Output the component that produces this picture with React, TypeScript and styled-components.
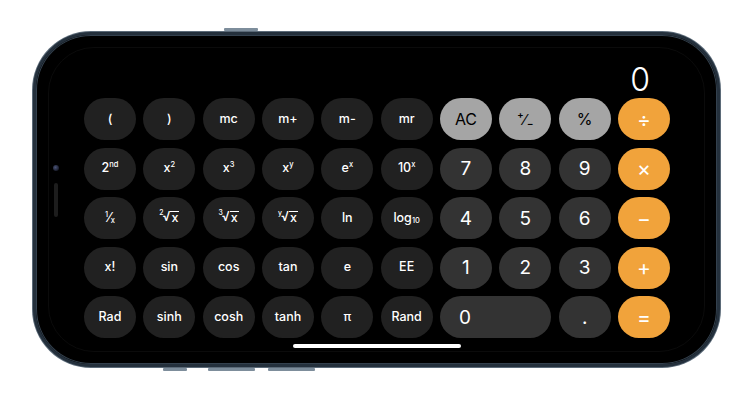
import React from 'react';
import styled, { createGlobalStyle } from 'styled-components';

const GlobalStyle = createGlobalStyle`
  html, body {
    margin: 0;
    background: #ffffff;
  }
  body {
    font-family: Inter, "Liberation Sans", "Noto Sans", sans-serif;
    -webkit-font-smoothing: antialiased;
  }
`;

type Variant = 'sci' | 'num' | 'fn' | 'op';

type Key = {
  label: React.ReactNode;
  variant: Variant;
  wide?: boolean;
  align?: 'left';
};

const colors: Record<Variant, { bg: string; fg: string; size: number }> = {
  sci: { bg: '#212121', fg: '#ffffff', size: 12.5 },
  num: { bg: '#333333', fg: '#ffffff', size: 19 },
  fn: { bg: '#a5a5a5', fg: '#000000', size: 16 },
  op: { bg: '#f1a33b', fg: '#ffffff', size: 21 },
};

const Page = styled.div`
  width: 754px;
  height: 400px;
  padding: 32px 0 0 33px;
  box-sizing: border-box;
`;

const Phone = styled.div`
  position: relative;
  width: 687px;
  height: 335px;
  box-sizing: border-box;
  border: 3px solid #24303c;
  border-radius: 58px;
  background: #000000;
  box-shadow: 0 0 0 1px #5b6a78, inset 0 0 0 1px #33404d;
  padding: 0 47px 0 48px;
  display: flex;
  flex-direction: column;
`;

const ScreenEdge = styled.div`
  position: absolute;
  inset: 12px;
  border-radius: 46px;
  border: 1px solid #0b0b0b;
  pointer-events: none;
`;

/* hardware buttons on the frame edge */
const ButtonRow = styled.div<{ $side: 'top' | 'bottom'; $left: number }>`
  position: absolute;
  ${(p) => (p.$side === 'top' ? 'top: -7px;' : 'bottom: -7px;')}
  left: ${(p) => p.$left}px;
  display: flex;
  gap: 13px;
`;

const SideButton = styled.div<{ $width: number }>`
  width: ${(p) => p.$width}px;
  height: 3px;
  background: #7d8d9b;
  border-radius: 1px;
`;

const Sensors = styled.div`
  position: absolute;
  left: 17px;
  top: 130px;
  display: flex;
  flex-direction: column;
  align-items: center;
  gap: 12px;
`;

const Camera = styled.div`
  width: 6px;
  height: 6px;
  border-radius: 50%;
  background: radial-gradient(circle at 40% 40%, #4a5478, #1a1d2c 70%);
`;

const Speaker = styled.div`
  width: 4px;
  height: 34px;
  border-radius: 2px;
  background: #1d1d1d;
`;

const Display = styled.div`
  height: 63px;
  display: flex;
  align-items: flex-end;
  justify-content: flex-end;
  padding: 0 20px 2px 0;
  box-sizing: border-box;
  color: #ffffff;
  font-size: 32px;
  font-weight: 300;
  line-height: 1;
`;

const Keypad = styled.div`
  display: grid;
  grid-template-columns: repeat(10, 52px);
  grid-auto-rows: 42px;
  column-gap: 7.33px;
  row-gap: 7.5px;
`;

const KeyButton = styled.button<{ $variant: Variant; $wide?: boolean; $align?: 'left' }>`
  grid-column: ${(p) => (p.$wide ? 'span 2' : 'auto')};
  border: none;
  border-radius: 21px;
  background: ${(p) => colors[p.$variant].bg};
  color: ${(p) => colors[p.$variant].fg};
  font-family: inherit;
  font-size: ${(p) => colors[p.$variant].size}px;
  font-weight: ${(p) => (p.$variant === 'sci' ? 500 : 400)};
  display: flex;
  align-items: center;
  justify-content: ${(p) => (p.$align === 'left' ? 'flex-start' : 'center')};
  padding: ${(p) => (p.$align === 'left' ? '0 0 0 19px' : '0')};
  line-height: 1;
  cursor: pointer;
`;

const Sup = styled.sup`
  font-size: 0.6em;
  vertical-align: 0;
  position: relative;
  top: -0.45em;
`;

const Sub = styled.sub`
  font-size: 0.6em;
  vertical-align: 0;
  position: relative;
  top: 0.3em;
`;

const Radical = styled.span`
  display: inline-flex;
  align-items: flex-start;
`;

const RootIndex = styled.span`
  font-size: 0.55em;
  margin-top: -1px;
  margin-right: -1px;
`;

const Radicand = styled.span`
  border-top: 1px solid currentColor;
  padding: 0 1px;
`;

const HomeBar = styled.div`
  align-self: center;
  width: 168px;
  height: 4px;
  border-radius: 2px;
  background: #ffffff;
  margin-top: 6px;
`;

const root = (idx: string) => (
  <Radical>
    <RootIndex>{idx}</RootIndex>√<Radicand>x</Radicand>
  </Radical>
);

const keys: Key[] = [
  { label: '(', variant: 'sci' },
  { label: ')', variant: 'sci' },
  { label: 'mc', variant: 'sci' },
  { label: 'm+', variant: 'sci' },
  { label: 'm-', variant: 'sci' },
  { label: 'mr', variant: 'sci' },
  { label: 'AC', variant: 'fn' },
  { label: '⁺∕₋', variant: 'fn' },
  { label: '%', variant: 'fn' },
  { label: '÷', variant: 'op' },

  { label: <>2<Sup>nd</Sup></>, variant: 'sci' },
  { label: <>x<Sup>2</Sup></>, variant: 'sci' },
  { label: <>x<Sup>3</Sup></>, variant: 'sci' },
  { label: <>x<Sup>y</Sup></>, variant: 'sci' },
  { label: <>e<Sup>x</Sup></>, variant: 'sci' },
  { label: <>10<Sup>x</Sup></>, variant: 'sci' },
  { label: '7', variant: 'num' },
  { label: '8', variant: 'num' },
  { label: '9', variant: 'num' },
  { label: '×', variant: 'op' },

  { label: <><Sup>1</Sup>⁄<Sub>x</Sub></>, variant: 'sci' },
  { label: root('2'), variant: 'sci' },
  { label: root('3'), variant: 'sci' },
  { label: root('y'), variant: 'sci' },
  { label: 'ln', variant: 'sci' },
  { label: <>log<Sub>10</Sub></>, variant: 'sci' },
  { label: '4', variant: 'num' },
  { label: '5', variant: 'num' },
  { label: '6', variant: 'num' },
  { label: '−', variant: 'op' },

  { label: 'x!', variant: 'sci' },
  { label: 'sin', variant: 'sci' },
  { label: 'cos', variant: 'sci' },
  { label: 'tan', variant: 'sci' },
  { label: 'e', variant: 'sci' },
  { label: 'EE', variant: 'sci' },
  { label: '1', variant: 'num' },
  { label: '2', variant: 'num' },
  { label: '3', variant: 'num' },
  { label: '+', variant: 'op' },

  { label: 'Rad', variant: 'sci' },
  { label: 'sinh', variant: 'sci' },
  { label: 'cosh', variant: 'sci' },
  { label: 'tanh', variant: 'sci' },
  { label: 'π', variant: 'sci' },
  { label: 'Rand', variant: 'sci' },
  { label: '0', variant: 'num', wide: true, align: 'left' },
  { label: '.', variant: 'num' },
  { label: '=', variant: 'op' },
];

export default function App() {
  return (
    <>
      <GlobalStyle />
      <Page>
        <Phone>
          <ScreenEdge />
          <ButtonRow $side="top" $left={188}>
            <SideButton $width={34} />
          </ButtonRow>
          <ButtonRow $side="bottom" $left={127}>
            <SideButton $width={24} />
          </ButtonRow>
          <ButtonRow $side="bottom" $left={172}>
            <SideButton $width={47} />
            <SideButton $width={47} />
          </ButtonRow>
          <Sensors>
            <Camera />
            <Speaker />
          </Sensors>
          <Display>0</Display>
          <Keypad>
            {keys.map((k, i) => (
              <KeyButton key={i} $variant={k.variant} $wide={k.wide} $align={k.align}>
                {k.label}
              </KeyButton>
            ))}
          </Keypad>
          <HomeBar />
        </Phone>
      </Page>
    </>
  );
}
